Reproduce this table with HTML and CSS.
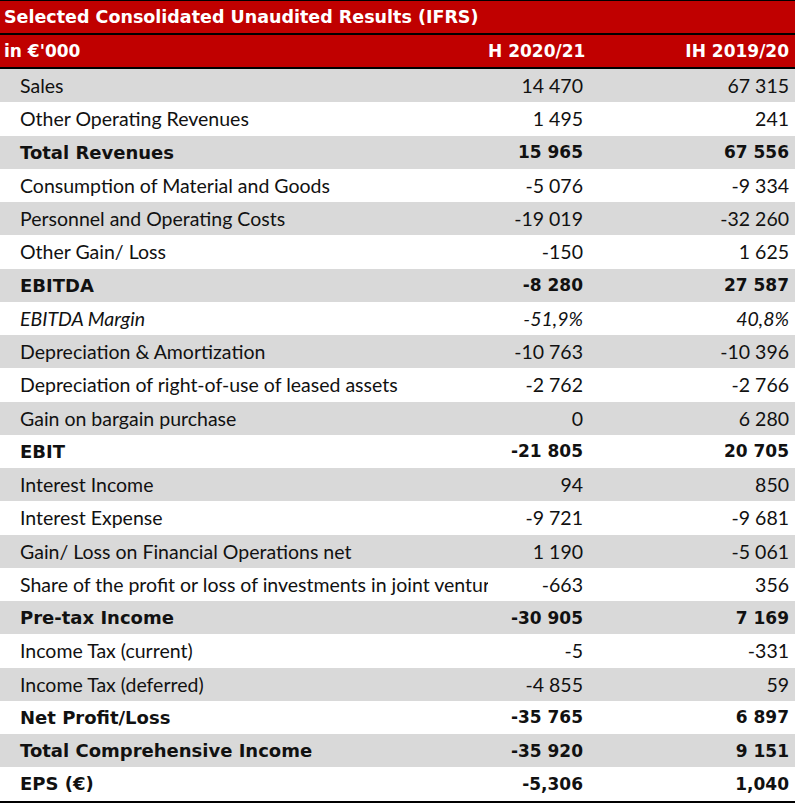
FILE: index.html
```html
<!DOCTYPE html>
<html lang="en">
<head>
<meta charset="utf-8">
<title>Selected Consolidated Unaudited Results (IFRS)</title>
<link rel="stylesheet" href="styles.css">
</head>
<body>
<table class="results">
  <colgroup>
    <col class="c-label">
    <col class="c-num1">
    <col class="c-num2">
  </colgroup>
  <thead>
    <tr class="title"><th colspan="3">Selected Consolidated Unaudited Results (IFRS)</th></tr>
    <tr class="head"><th class="lbl">in €'000</th><th class="num">H 2020/21</th><th class="num last">IH 2019/20</th></tr>
  </thead>
  <tbody>
    <tr class="g"><td class="lbl">Sales</td><td class="num">14 470</td><td class="num last">67 315</td></tr>
    <tr><td class="lbl">Other Operating Revenues</td><td class="num">1 495</td><td class="num last">241</td></tr>
    <tr class="g b"><td class="lbl">Total Revenues</td><td class="num">15 965</td><td class="num last">67 556</td></tr>
    <tr><td class="lbl">Consumption of Material and Goods</td><td class="num">-5 076</td><td class="num last">-9 334</td></tr>
    <tr class="g"><td class="lbl">Personnel and Operating Costs</td><td class="num">-19 019</td><td class="num last">-32 260</td></tr>
    <tr><td class="lbl">Other Gain/ Loss</td><td class="num">-150</td><td class="num last">1 625</td></tr>
    <tr class="g b"><td class="lbl">EBITDA</td><td class="num">-8 280</td><td class="num last">27 587</td></tr>
    <tr class="i"><td class="lbl">EBITDA Margin</td><td class="num">-51,9%</td><td class="num last">40,8%</td></tr>
    <tr class="g"><td class="lbl">Depreciation &amp; Amortization</td><td class="num">-10 763</td><td class="num last">-10 396</td></tr>
    <tr><td class="lbl">Depreciation of right-of-use of leased assets</td><td class="num">-2 762</td><td class="num last">-2 766</td></tr>
    <tr class="g"><td class="lbl">Gain on bargain purchase</td><td class="num">0</td><td class="num last">6 280</td></tr>
    <tr class="b"><td class="lbl">EBIT</td><td class="num">-21 805</td><td class="num last">20 705</td></tr>
    <tr class="g"><td class="lbl">Interest Income</td><td class="num">94</td><td class="num last">850</td></tr>
    <tr><td class="lbl">Interest Expense</td><td class="num">-9 721</td><td class="num last">-9 681</td></tr>
    <tr class="g"><td class="lbl">Gain/ Loss on Financial Operations net</td><td class="num">1 190</td><td class="num last">-5 061</td></tr>
    <tr><td class="lbl">Share of the profit or loss of investments in joint ventures</td><td class="num">-663</td><td class="num last">356</td></tr>
    <tr class="g b"><td class="lbl">Pre-tax Income</td><td class="num">-30 905</td><td class="num last">7 169</td></tr>
    <tr><td class="lbl">Income Tax (current)</td><td class="num">-5</td><td class="num last">-331</td></tr>
    <tr class="g"><td class="lbl">Income Tax (deferred)</td><td class="num">-4 855</td><td class="num last">59</td></tr>
    <tr class="b"><td class="lbl">Net Profit/Loss</td><td class="num">-35 765</td><td class="num last">6 897</td></tr>
    <tr class="g b"><td class="lbl">Total Comprehensive Income</td><td class="num">-35 920</td><td class="num last">9 151</td></tr>
    <tr class="b end"><td class="lbl">EPS (€)</td><td class="num">-5,306</td><td class="num last">1,040</td></tr>
  </tbody>
</table>
</body>
</html>
```
FILE: styles.css
```css
html, body {
  margin: 0;
  padding: 0;
  background: #ffffff;
}

.results {
  width: 795px;
  table-layout: fixed;
  border-collapse: collapse;
  font-family: "Lato", "Open Sans", sans-serif;
  font-size: 19.5px;
  color: #111111;
}

.c-label { width: 488px; }
.c-num1 { width: 100px; }
.c-num2 { width: 207px; }

.results th,
.results td {
  padding: 0;
  white-space: nowrap;
  overflow: hidden;
}

.title th,
.head th,
.b td {
  font-family: "DejaVu Sans", "Lato", sans-serif;
  font-weight: 700;
  font-size: 17px;
}

.title th {
  background: #c00000;
  color: #ffffff;
  text-align: left;
  font-size: 17.5px;
  height: 32px;
  padding-left: 4px;
  border-top: 1px solid #000000;
  border-bottom: 2px solid #000000;
}

.head th {
  background: #c00000;
  color: #ffffff;
  height: 32px;
  border-bottom: 2px solid #000000;
}

.results .head th.lbl {
  text-align: left;
  padding-left: 4px;
}

.results tbody td {
  height: 33.25px;
}

.results tbody td.lbl {
  padding-left: 20px;
  text-align: left;
}

.results tbody .b td.lbl {
  font-size: 18px;
}

.results .num {
  text-align: right;
  padding-right: 5px;
}

.results .head th.num {
  padding-right: 6px;
}

.results .num.last,
.results .head th.num.last {
  padding-right: 6px;
}

.g td {
  background: #d9d9d9;
}

.i td {
  font-style: italic;
}

.end td {
  border-bottom: 2px solid #000000;
}
```
